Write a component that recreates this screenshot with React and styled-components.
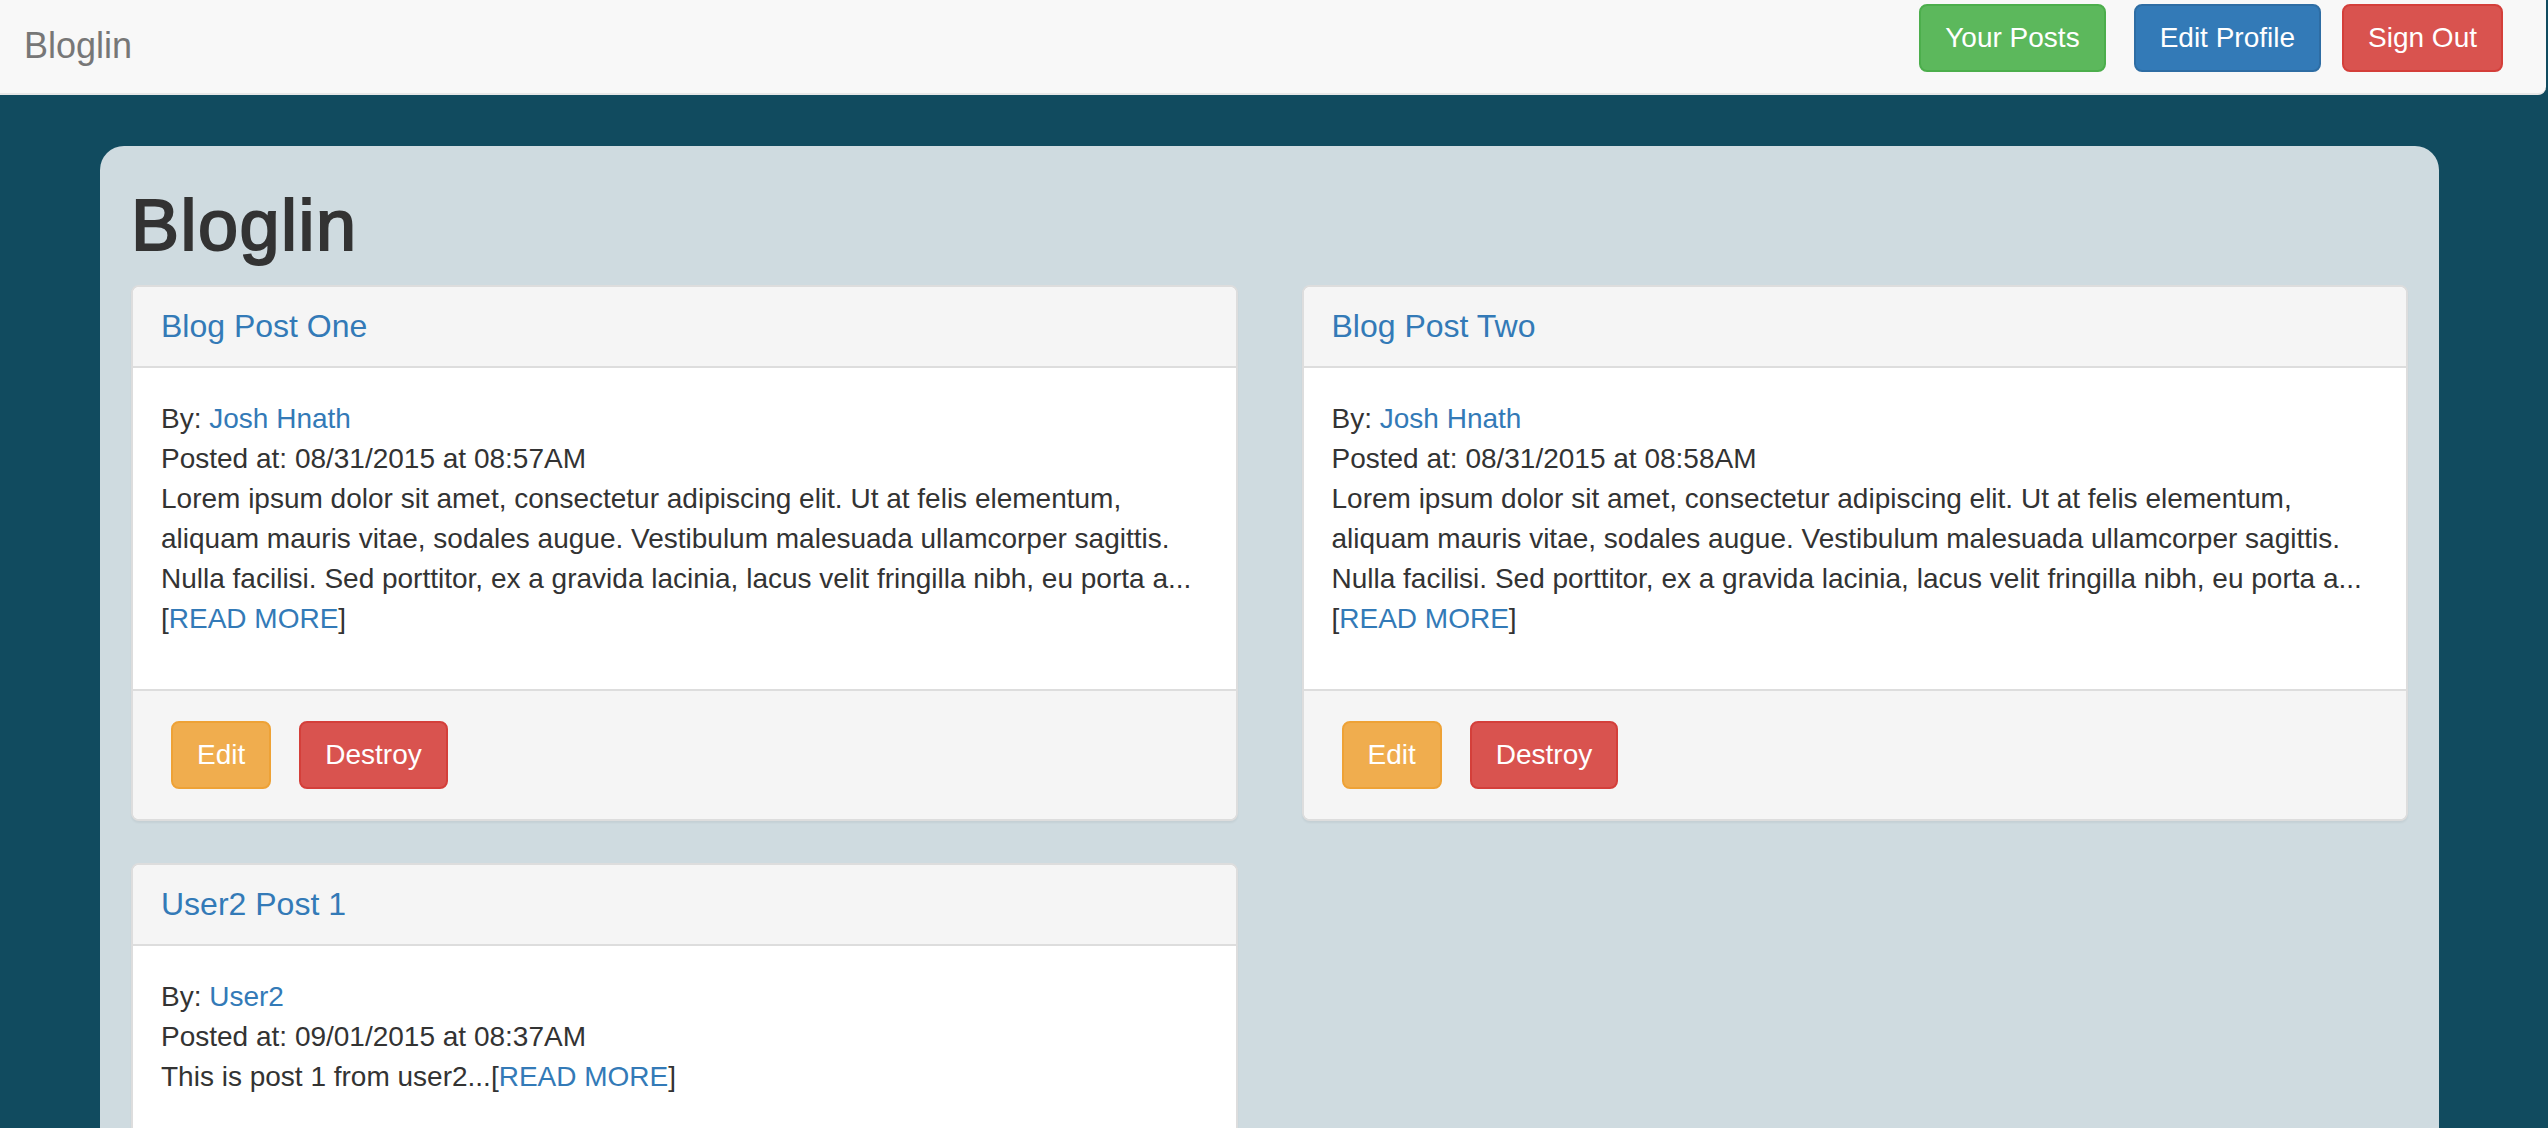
import React from 'react';
import styled, { createGlobalStyle } from 'styled-components';

const GlobalStyles = createGlobalStyle`
  * {
    box-sizing: border-box;
  }

  html,
  body {
    margin: 0;
    padding: 0;
    background: #114b5f;
    font-family: "Liberation Sans", Arial, sans-serif;
    font-size: 28px;
    line-height: 40px;
    color: #333;
  }

  a {
    color: #337ab7;
    text-decoration: none;
  }
`;

const Page = styled.div`
  width: 100%;
  min-height: 100vh;
  background: #114b5f;
`;

const Navbar = styled.nav`
  height: 95px;
  width: 2546px;
  background: #f8f8f8;
  border-bottom: 2px solid #e7e7e7;
  border-bottom-right-radius: 8px;
  padding: 4px 43px 0 24px;

  display: flex;
  align-items: flex-start;
  justify-content: space-between;
`;

const Brand = styled.a`
  color: #777;
  font-size: 36px;
  line-height: 40px;
  margin-top: 22px;
`;

const NavButtons = styled.div`
  display: flex;
  align-items: center;
`;

const colors = {
  success: ['#5cb85c', '#4cae4c'],
  primary: ['#337ab7', '#2e6da4'],
  danger: ['#d9534f', '#d43f3a'],
  warning: ['#f0ad4e', '#eea236'],
};

const Button = styled.button`
  height: 68px;
  padding: 0 24px;
  margin-left: ${(p) => p.$gap || 0}px;
  border-radius: 8px;
  border: 2px solid ${(p) => colors[p.$kind][1]};
  background: ${(p) => colors[p.$kind][0]};
  color: #fff;
  font-family: "Liberation Sans", Arial, sans-serif;
  font-size: 28px;
  line-height: 40px;
  cursor: pointer;
`;

const Container = styled.main`
  width: 2339px;
  margin: 51px 0 0 100px;
  padding: 0 31px 40px;
  background: #cfdbe0;
  border-radius: 24px 24px 0 0;
  min-height: 1100px;
  display: flow-root;
`;

const Title = styled.h1`
  font-size: 72px;
  line-height: 79px;
  font-weight: 400;
  -webkit-text-stroke: 2px #333;
  letter-spacing: 1.5px;
  margin: 40px 0 20px;
  color: #333;
`;

const Grid = styled.div`
  display: grid;
  grid-template-columns: 1fr 1fr;
  column-gap: 64px;
  align-items: start;
`;

const Card = styled.article`
  background: #fff;
  border: 2px solid #ddd;
  border-radius: 8px;
  box-shadow: 0 2px 2px rgba(0, 0, 0, 0.05);
  margin-bottom: 42px;
  overflow: hidden;
`;

const CardHeader = styled.header`
  background: #f5f5f5;
  border-bottom: 2px solid #ddd;
  padding: 21px 28px;
  font-size: 32px;
  line-height: 37px;
`;

const CardBody = styled.div`
  padding: 31px 28px 30px;
`;

const Text = styled.p`
  margin: 0 0 20px;
`;

const CardFooter = styled.footer`
  background: #f5f5f5;
  border-top: 2px solid #ddd;
  padding: 30px 38px 30px;
  display: flex;
  gap: 28px;
`;

const posts = [
  {
    title: 'Blog Post One',
    author: 'Josh Hnath',
    date: '08/31/2015 at 08:57AM',
    body: 'Lorem ipsum dolor sit amet, consectetur adipiscing elit. Ut at felis elementum, aliquam mauris vitae, sodales augue. Vestibulum malesuada ullamcorper sagittis. Nulla facilisi. Sed porttitor, ex a gravida lacinia, lacus velit fringilla nibh, eu porta a...',
    owner: true,
  },
  {
    title: 'Blog Post Two',
    author: 'Josh Hnath',
    date: '08/31/2015 at 08:58AM',
    body: 'Lorem ipsum dolor sit amet, consectetur adipiscing elit. Ut at felis elementum, aliquam mauris vitae, sodales augue. Vestibulum malesuada ullamcorper sagittis. Nulla facilisi. Sed porttitor, ex a gravida lacinia, lacus velit fringilla nibh, eu porta a...',
    owner: true,
  },
  {
    title: 'User2 Post 1',
    author: 'User2',
    date: '09/01/2015 at 08:37AM',
    body: 'This is post 1 from user2...',
    owner: false,
  },
];

function PostCard({ post }) {
  return (
    <Card>
      <CardHeader>
        <a href="#">{post.title}</a>
      </CardHeader>
      <CardBody>
        <Text>
          By: <a href="#">{post.author}</a>
          <br />
          Posted at: {post.date}
          <br />
          {post.body}[<a href="#">READ MORE</a>]
        </Text>
      </CardBody>
      {post.owner && (
        <CardFooter>
          <Button $kind="warning">Edit</Button>
          <Button $kind="danger">Destroy</Button>
        </CardFooter>
      )}
    </Card>
  );
}

function App() {
  return (
    <Page>
      <GlobalStyles />
      <Navbar>
        <Brand href="#">Bloglin</Brand>
        <NavButtons>
          <Button $kind="success">Your Posts</Button>
          <Button $kind="primary" $gap={28}>Edit Profile</Button>
          <Button $kind="danger" $gap={21}>Sign Out</Button>
        </NavButtons>
      </Navbar>
      <Container>
        <Title>Bloglin</Title>
        <Grid>
          {posts.map((post) => (
            <PostCard key={post.title} post={post} />
          ))}
        </Grid>
      </Container>
    </Page>
  );
}

export default App;
